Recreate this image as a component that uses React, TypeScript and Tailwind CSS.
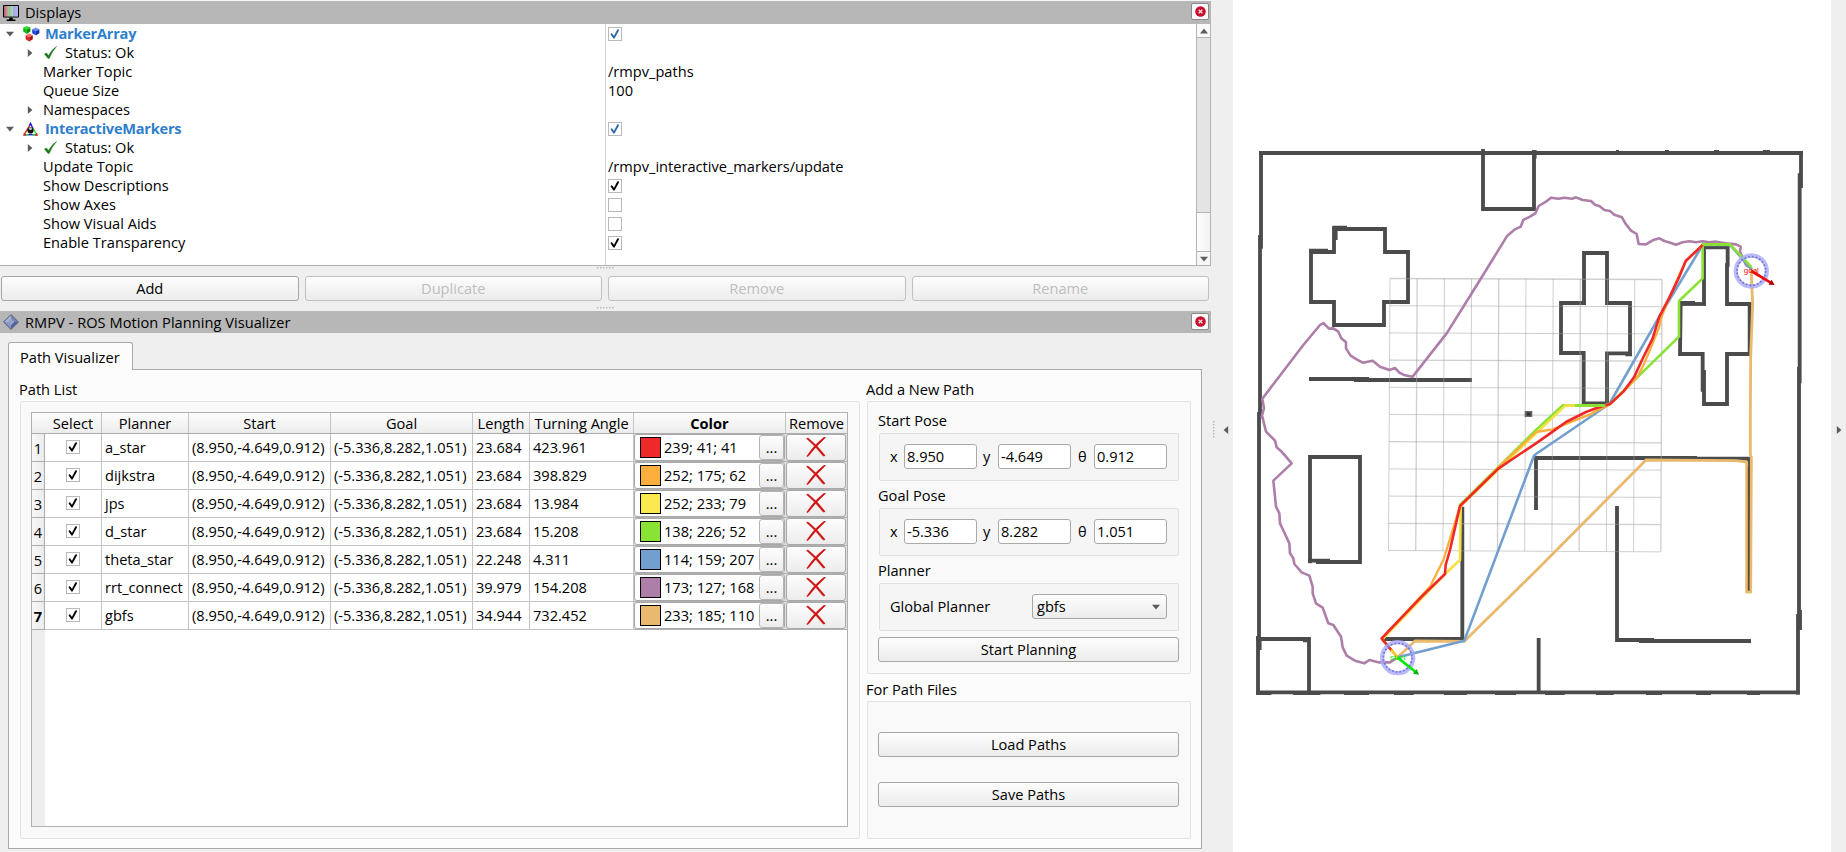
import type { ReactNode } from "react";

type Row = { planner: string; length: string; angle: string; rgb: string; swatch: string };

const START = "(8.950,-4.649,0.912)";
const GOAL = "(-5.336,8.282,1.051)";

const rows: Row[] = [
  { planner: "a_star", length: "23.684", angle: "423.961", rgb: "239; 41; 41", swatch: "bg-[#ef2929]" },
  { planner: "dijkstra", length: "23.684", angle: "398.829", rgb: "252; 175; 62", swatch: "bg-[#fcaf3e]" },
  { planner: "jps", length: "23.684", angle: "13.984", rgb: "252; 233; 79", swatch: "bg-[#fce94f]" },
  { planner: "d_star", length: "23.684", angle: "15.208", rgb: "138; 226; 52", swatch: "bg-[#8ae234]" },
  { planner: "theta_star", length: "22.248", angle: "4.311", rgb: "114; 159; 207", swatch: "bg-[#729fcf]" },
  { planner: "rrt_connect", length: "39.979", angle: "154.208", rgb: "173; 127; 168", swatch: "bg-[#ad7fa8]" },
  { planner: "gbfs", length: "34.944", angle: "732.452", rgb: "233; 185; 110", swatch: "bg-[#e9b96e]" },
];

/* ---------- small widgets ---------- */

function Checkbox({ checked, blue }: { checked?: boolean; blue?: boolean }) {
  return (
    <span className="flex h-[14px] w-[14px] shrink-0 items-center justify-center border border-[#b9b9b9] bg-white">
      {checked && (
        <svg viewBox="0 0 12 12" className="h-3 w-3">
          <path
            d="M2.6 6.2 L5 9.6 L9 2.2"
            fill="none"
            stroke={blue ? "#2a6aa8" : "#000"}
            strokeWidth="1.9"
            strokeLinejoin="round"
            strokeLinecap="round"
          />
        </svg>
      )}
    </span>
  );
}

function CloseButton() {
  return (
    <button className="mb-[2px] flex h-[17px] w-[18px] items-center justify-center rounded-[2px] border border-[#8b8b8b] bg-[#fbfbfb]">
      <svg viewBox="0 0 10 10" className="h-[11px] w-[11px]">
        <circle cx="5" cy="5" r="4.8" fill="#c8102e" />
        <path d="M3.4 3.4 L6.6 6.6 M6.6 3.4 L3.4 6.6" stroke="#f8d6dc" strokeWidth="1.3" />
      </svg>
    </button>
  );
}

function Button({ children, disabled, className = "" }: { children: ReactNode; disabled?: boolean; className?: string }) {
  return (
    <button
      className={`flex h-[25px] items-center justify-center rounded-[3px] border bg-linear-to-b from-[#fdfdfd] to-[#ececec] pb-px ${
        disabled ? "border-[#c0c0c0] text-[#bebebe]" : "border-[#a6a6a6] text-black"
      } ${className}`}
    >
      {children}
    </button>
  );
}

function SplitterDots() {
  return (
    <svg viewBox="0 0 18 2" className="block h-[2px] w-[18px]">
      {[0, 3, 6, 9, 12, 15].map((x) => (
        <rect key={x} x={x} y="0" width="1.4" height="1.4" fill="#b4b4b4" />
      ))}
    </svg>
  );
}

function Triangle({ dir, size = 8 }: { dir: "up" | "down" | "left" | "right"; size?: number }) {
  const points = {
    up: "0,6.5 8,6.5 4,1.5",
    down: "0,1.8 8,1.8 4,6.6",
    left: "6.2,0 6.2,8 1.6,4",
    right: "1.8,0 1.8,8 6.4,4",
  }[dir];
  return (
    <svg viewBox="0 0 8 8" width={size} height={size} className="shrink-0">
      <polygon points={points} fill="#5c5c5c" />
    </svg>
  );
}

function Field({ label, value, gap }: { label: string; value: string; gap: string }) {
  return (
    <>
      <span className={gap}>{label}</span>
      <span className="flex h-[25px] w-[73px] items-center rounded-[3px] border border-[#a9a9a9] bg-white pl-[2px]">{value}</span>
    </>
  );
}

function Pose({ title, x, y, theta }: { title: string; x: string; y: string; theta: string }) {
  return (
    <section>
      <h3 className="h-[27px] leading-[29px]">{title}</h3>
      <div className="ml-px flex h-[48px] items-center rounded-[2px] border border-[#e0e0e0] bg-[#f5f5f5] pb-px pl-[10px]">
        <Field label="x" value={x} gap="w-[14px]" />
        <Field label="y" value={y} gap="ml-[6px] w-[15px]" />
        <Field label="θ" value={theta} gap="ml-[7px] w-[16px]" />
      </div>
    </section>
  );
}

/* ---------- icons ---------- */

function MonitorIcon() {
  return (
    <svg viewBox="0 0 16 16" className="h-4 w-4 shrink-0">
      <defs>
        <linearGradient id="screen">
          <stop offset="0" stopColor="#b8606a" />
          <stop offset="0.3" stopColor="#cdaaac" />
          <stop offset="0.36" stopColor="#84cc92" />
          <stop offset="0.64" stopColor="#acdcb4" />
          <stop offset="0.68" stopColor="#a9a6e0" />
          <stop offset="1" stopColor="#b4b2f4" />
        </linearGradient>
      </defs>
      <rect x="0" y="0" width="16" height="12.5" rx="0.8" fill="#000" />
      <rect x="1" y="1" width="14" height="10.6" fill="url(#screen)" />
      <path d="M6.6 12.4h2.8l.6 2h2.4V16H3.6v-1.6H6z" fill="#000" />
    </svg>
  );
}

function CubesIcon() {
  const cube = (x: number, y: number, light: string, mid: string, dark: string) => (
    <g transform={`translate(${x} ${y})`}>
      <polygon points="3.6,0 7.2,1.6 3.6,3.6 0,1.6" fill={light} />
      <polygon points="0,1.6 3.6,3.6 3.6,8 0,5.6" fill={mid} />
      <polygon points="7.2,1.6 3.6,3.6 3.6,8 7.2,5.6" fill={dark} />
    </g>
  );
  return (
    <svg viewBox="0 0 17 16" className="h-4 w-[17px] shrink-0">
      {cube(0.2, 0, "#2be02b", "#10b810", "#069006")}
      {cube(9.2, 1.6, "#6f8ff5", "#1d45d8", "#1434a8")}
      {cube(2.6, 7.6, "#f56a6a", "#d92525", "#a81010")}
    </svg>
  );
}

function InteractiveIcon() {
  return (
    <svg viewBox="0 0 15 14" className="h-[14px] w-[15px] shrink-0">
      <path d="M7.5 2 L1.4 12.3" stroke="#e02020" strokeWidth="1.4" />
      <path d="M7.5 2 L10.4 7" stroke="#2020e0" strokeWidth="1.4" />
      <path d="M9.8 6 L13.4 12" stroke="#2adb2a" strokeWidth="1.4" />
      <path d="M1 12.7 H14" stroke="#2020e0" strokeWidth="1.4" />
      <path d="M2.5 12.7 H5.5 M9.5 12.7 H12.5" stroke="#2adb2a" strokeWidth="1.4" />
      <path d="M7.5 0 L9.4 3.4 H5.6Z" fill="#2020e0" />
      <path d="M0 13.8 L1 10.6 L3 13.8Z M15 13.8 L14 10.6 L12 13.8Z" fill="#e02020" />
      <circle cx="7.5" cy="8.4" r="3.1" fill="#111" />
      <path d="M5.4 6.8 L7.5 5.6 L9.6 6.8 L7.5 8.2Z" fill="#cfcfcf" />
    </svg>
  );
}

function DiamondIcon() {
  return (
    <svg viewBox="0 0 16 16" className="h-4 w-4 shrink-0">
      <polygon points="8,1 8,8 1,8" fill="#a9b6d3" />
      <polygon points="8,1 15,8 8,8" fill="#7385b3" />
      <polygon points="1,8 8,8 8,15" fill="#8595c0" />
      <polygon points="15,8 8,8 8,15" fill="#51639a" />
      <polygon points="8,4.4 11.4,8 8,11.4 4.6,8" fill="#93a3cb" />
      <polygon points="8,0.6 15.4,8 8,15.4 0.6,8" fill="none" stroke="#3a4973" strokeWidth="0.9" />
    </svg>
  );
}

function OkIcon() {
  return (
    <svg viewBox="0 0 13 13" className="h-[13px] w-[13px] shrink-0">
      <path
        d="M0.4 8 L2.4 6.9 L4.6 9.6 Q7.6 3.4 12.6 0.4 Q8 5.4 5.2 12.6 L4 12.6Z"
        fill="#1d7a1d"
        stroke="#1d7a1d"
        strokeWidth="0.4"
      />
    </svg>
  );
}

function CrossIcon() {
  return (
    <svg viewBox="0 0 20 20" className="h-5 w-5">
      <g fill="#d01010" stroke="#d01010" strokeWidth="0.6">
        <path d="M0.6 1.6 Q1.6 0.4 3 1.8 Q11.5 8.6 19 18.4 Q18 19.6 16.8 18.6 Q10 9.6 0.6 1.6Z" />
        <path d="M19.6 0.4 Q18 0 16.6 1.4 Q7.6 8.4 0.8 19.2 Q1.4 19.8 2.4 19 Q9.4 9.6 19.6 0.4Z" />
      </g>
    </svg>
  );
}

/* ---------- displays tree ---------- */

function TreeRow({ children, value }: { children: ReactNode; value?: ReactNode }) {
  return (
    <div className="flex h-[19px]">
      <div className="flex w-[608px] items-center">{children}</div>
      <div className="flex items-center">{value}</div>
    </div>
  );
}

function Leaf({ label, value }: { label: string; value: ReactNode }) {
  return (
    <TreeRow value={value}>
      <span className="pl-[43px]">{label}</span>
    </TreeRow>
  );
}

function Status() {
  return (
    <TreeRow>
      <span className="flex w-[44px] pl-[26px]">
        <Triangle dir="right" />
      </span>
      <OkIcon />
      <span className="pl-2">Status: Ok</span>
    </TreeRow>
  );
}

function DisplayHead({ icon, name }: { icon: ReactNode; name: string }) {
  return (
    <TreeRow value={<Checkbox checked blue />}>
      <span className="flex w-[23px] pl-[6px]">
        <Triangle dir="down" />
      </span>
      <span className="flex w-[22px]">{icon}</span>
      <span className="font-bold tracking-[-0.25px] text-[#2f7fcc]">{name}</span>
    </TreeRow>
  );
}

function DisplaysPanel() {
  return (
    <>
      <header className="flex h-[23px] items-center justify-between bg-[#b7b7b7] pl-[3px] pr-[2px]">
        <div className="flex items-center gap-[6px]">
          <MonitorIcon />
          <span>Displays</span>
        </div>
        <CloseButton />
      </header>
      <div className="flex h-[242px] border-b border-[#b0b0b0] bg-white">
        <div className="flex-1 bg-[linear-gradient(#d4d4d4,#d4d4d4)] bg-[length:1px_100%] bg-[position:605px_0] bg-no-repeat">
          <DisplayHead icon={<CubesIcon />} name="MarkerArray" />
          <Status />
          <Leaf label="Marker Topic" value="/rmpv_paths" />
          <Leaf label="Queue Size" value="100" />
          <TreeRow>
            <span className="flex w-[43px] pl-[26px]">
              <Triangle dir="right" />
            </span>
            <span>Namespaces</span>
          </TreeRow>
          <DisplayHead icon={<InteractiveIcon />} name="InteractiveMarkers" />
          <Status />
          <Leaf label="Update Topic" value="/rmpv_interactive_markers/update" />
          <Leaf label="Show Descriptions" value={<Checkbox checked />} />
          <Leaf label="Show Axes" value={<Checkbox />} />
          <Leaf label="Show Visual Aids" value={<Checkbox />} />
          <Leaf label="Enable Transparency" value={<Checkbox checked />} />
        </div>
        <div className="flex w-[15px] flex-col border-x border-[#b4b4b4] bg-[#e4e4e4]">
          <div className="flex h-[14px] items-center justify-center border-b border-[#b4b4b4] bg-[#fafafa]">
            <Triangle dir="up" />
          </div>
          <div className="flex-1" />
          <div className="h-[40px] border-y border-[#b4b4b4] bg-linear-to-r from-[#fdfdfd] to-[#f2f2f2]" />
          <div className="flex h-[13px] items-center justify-center bg-[#f6f6f6]">
            <Triangle dir="down" />
          </div>
        </div>
      </div>
      <div className="flex h-[10px] justify-center pt-px">
        <SplitterDots />
      </div>
      <div className="grid grid-cols-4 gap-x-[6px] pl-px pr-[2px]">
        <Button>Add</Button>
        <Button disabled>Duplicate</Button>
        <Button disabled>Remove</Button>
        <Button disabled>Rename</Button>
      </div>
      <div className="flex h-[10px] justify-center pt-[6px]">
        <SplitterDots />
      </div>
    </>
  );
}

/* ---------- path visualizer ---------- */

const COLS = "grid grid-cols-[13px_57px_87px_142px_142px_57px_104px_152px_61px]";

function PathTable() {
  const head = "flex items-center justify-center border-r border-[#c4c4c4]";
  const cell = "flex items-center border-r border-b border-[#c4c4c4] pl-[3px] whitespace-nowrap";
  return (
    <div className="flex h-[415px] w-[817px] flex-col border border-[#b0b0b0] bg-white">
      <div className={`${COLS} h-[21px] shrink-0 border-b border-[#acacac] bg-linear-to-b from-[#fdfdfd] to-[#ececec]`}>
        <span />
        <span className={head}>Select</span>
        <span className={head}>Planner</span>
        <span className={head}>Start</span>
        <span className={head}>Goal</span>
        <span className={head}>Length</span>
        <span className={`${head} whitespace-nowrap`}>Turning Angle</span>
        <span className={`${head} font-bold`}>Color</span>
        <span className="flex items-center justify-center">Remove</span>
      </div>
      {rows.map((r, i) => (
        <div key={r.planner} className={`${COLS} h-[28px] shrink-0`}>
          <span
            className={`flex items-center justify-center border-r border-b border-[#acacac] bg-linear-to-r from-[#f8f8f8] to-[#ececec] pt-[2px] ${
              i === rows.length - 1 ? "font-bold" : ""
            }`}
          >
            {i + 1}
          </span>
          <span className="flex items-center justify-center border-r border-b border-[#c4c4c4] pb-px">
            <Checkbox checked />
          </span>
          <span className={cell}>{r.planner}</span>
          <span className={cell}>{START}</span>
          <span className={cell}>{GOAL}</span>
          <span className={cell}>{r.length}</span>
          <span className={cell}>{r.angle}</span>
          <span className="flex border-b border-[#b0b0b0] bg-[#e0e0e0] pr-[1px]">
            <span className="flex flex-1 items-center rounded-[3px] border border-[#a8a8a8] bg-white pl-[5px]">
              <span className={`h-[21px] w-[21px] border border-black ${r.swatch}`} />
              <span className="pl-[3px]">{r.rgb}</span>
              <span className="ml-auto flex h-[25px] w-[25px] items-center justify-center rounded-[3px] border border-[#b4b4b4] bg-linear-to-b from-[#fdfdfd] to-[#ececec]">
                ...
              </span>
            </span>
          </span>
          <span className="flex border-b border-[#b0b0b0] bg-[#e0e0e0] pr-px">
            <span className="flex flex-1 items-center justify-center rounded-[3px] border border-[#a8a8a8] bg-linear-to-b from-[#fdfdfd] to-[#ececec] pb-[2px]">
              <CrossIcon />
            </span>
          </span>
        </div>
      ))}
      <div className="w-[13px] flex-1 bg-[#eeeeee]" />
    </div>
  );
}

function VisualizerPanel() {
  return (
    <>
      <header className="flex h-[22px] shrink-0 items-center justify-between bg-[#b7b7b7] pl-[3px] pr-[2px]">
        <div className="flex items-center gap-[6px]">
          <DiamondIcon />
          <span className="tracking-[0.04px]">RMPV - ROS Motion Planning Visualizer</span>
        </div>
        <CloseButton />
      </header>
      <div className="flex h-[36px] items-end pl-[8px]">
        <div className="relative top-px z-10 flex h-[28px] w-[125px] items-center rounded-t-[3px] border border-b-0 border-[#a9a9a9] bg-[#fcfcfc] pl-[11px] pt-px">
          Path Visualizer
        </div>
      </div>
      <div className="ml-[8px] flex h-[480px] w-[1194px] shrink-0 border border-[#a9a9a9] bg-[#fcfcfc] pl-[11px] pt-[6px]">
        <section>
          <h2 className="-ml-px h-[25px] leading-[27px]">Path List</h2>
          <div className="flex h-[438px] w-[840px] rounded-[2px] border border-[#e2e2e2] bg-[#f9f9f9] pl-[10px] pt-[10px]">
            <PathTable />
          </div>
        </section>
        <section className="ml-[7px] w-[324px]">
          <h2 className="-ml-px h-[25px] leading-[27px]">Add a New Path</h2>
          <div className="h-[273px] rounded-[2px] border border-[#e2e2e2] bg-[#f9f9f9] pl-[10px] pr-[11px] pt-[4px]">
            <Pose title="Start Pose" x="8.950" y="-4.649" theta="0.912" />
            <Pose title="Goal Pose" x="-5.336" y="8.282" theta="1.051" />
            <section>
              <h3 className="h-[27px] leading-[29px]">Planner</h3>
              <div className="ml-px flex h-[48px] items-center justify-between rounded-[2px] border border-[#e0e0e0] bg-[#f5f5f5] pb-px pl-[10px] pr-[11px]">
                <span>Global Planner</span>
                <span className="flex h-[25px] w-[135px] items-center justify-between rounded-[3px] border border-[#a6a6a6] bg-linear-to-b from-[#fdfdfd] to-[#ececec] pl-[4px] pr-[6px]">
                  gbfs
                  <Triangle dir="down" />
                </span>
              </div>
            </section>
            <Button className="mt-[6px] w-full">Start Planning</Button>
          </div>
          <h2 className="-ml-px h-[27px] leading-[31px]">For Path Files</h2>
          <div className="h-[138px] rounded-[2px] border border-[#e2e2e2] bg-[#f9f9f9] pl-[10px] pr-[11px] pt-[30px]">
            <Button className="w-full">Load Paths</Button>
            <Button className="mt-[25px] w-full">Save Paths</Button>
          </div>
        </section>
      </div>
    </>
  );
}

/* ---------- map view ---------- */

type Pt = [number, number];
// The map is surveyed in four tiles; each helper moves a tile's points to map units (1/3 px).
const tile = (dx: number, dy: number) => (...pts: Pt[]): Pt[] => pts.map(([x, y]) => [x + dx, y + dy] as Pt);
const nw = tile(-9, 390);
const ne = tile(909, 390);
const sw = tile(-9, 1230);
const se = tile(909, 1230);
const str = (pts: Pt[]) => pts.map((p) => p.join(",")).join(" ");

const walls: Pt[][] = [
  nw([87, 69], [1719, 69]),
  nw([93, 64], [93, 356]),
  nw([90, 315], [90, 865]),
  nw([87, 846], [87, 1560]),
  nw([759, 57], [759, 237], [912, 237], [912, 60]),
  nw([914, 60], [914, 86]),
  nw([312, 290], [312, 366], [243, 366], [243, 516], [312, 516], [312, 585], [462, 585], [462, 516], [534, 516], [534, 366], [465, 366], [465, 297], [308, 297]),
  nw([307, 293], [351, 293]),
  nw([317, 293], [317, 330]),
  nw([237, 362], [294, 362]),
  nw([237, 747], [417, 747]),
  nw([372, 750], [726, 750]),
  ne([795, 64], [795, 174]),
  ne([791, 130], [791, 760]),
  ne([789, 710], [789, 1500]),
  ne([144, 524], [144, 369], [213, 369], [213, 519], [282, 519], [282, 670], [213, 670], [213, 820], [143, 820], [143, 669], [75, 669], [75, 519], [150, 519]),
  ne([268, 673], [288, 673]),
  ne([504, 524], [504, 352], [575, 352], [575, 410]),
  ne([573, 400], [573, 522], [641, 522], [641, 672], [573, 672], [573, 822], [504, 822], [504, 720]),
  ne([500, 785], [500, 672], [432, 672], [434, 519], [477, 519]),
  ne([434, 522], [510, 522]),
  sw([240, 460], [240, 141], [390, 141], [390, 456], [258, 456]),
  sw([234, 452], [300, 452]),
  sw([78, 687], [237, 687], [237, 850]),
  sw([219, 691], [237, 691]),
  sw([84, 678], [84, 854]),
  sw([89, 690], [89, 720]),
  sw([78, 847], [1709, 847]),
  sw([697, 290], [697, 692]),
  sw([456, 687], [703, 687]),
  sw([918, 300], [918, 144], [1401, 144]),
  se([483, 146], [641, 146]),
  se([638, 142], [638, 547]),
  se([243, 288], [243, 690], [354, 690]),
  se([309, 693], [645, 693]),
  se([8, 684], [8, 850]),
  se([792, 600], [792, 660]),
  se([786, 612], [786, 854]),
];

const dashes: Pt[][] = [
  ...[[78, 124], [189, 271], [342, 417], [492, 551], [642, 711], [795, 858], [945, 1004], [1098, 1151], [1248, 1296], [1398, 1443], [1551, 1590]].map(
    ([a, b]) => sw([a, 852], [b, 852])
  ),
  ...[[240, 249], [387, 399], [534, 549], [681, 702]].map(([a, b]) => ne([a, 63], [b, 63])),
];

const rrt: Pt[] = [
  ...ne([645, 415], [630, 405], [612, 365], [614, 350], [600, 343], [580, 341], [540, 335], [520, 337], [500, 334], [480, 337], [460, 334], [440, 337], [420, 344], [403, 338], [385, 333], [370, 325], [350, 331], [330, 343], [308, 342], [302, 312], [285, 302], [268, 280], [258, 262], [235, 254], [222, 243], [205, 240], [190, 228], [178, 225], [165, 213], [140, 210], [120, 202], [108, 206], [85, 203], [68, 206], [45, 203], [30, 215], [8, 228], [0, 246]),
  ...nw([916, 250], [900, 260], [880, 270], [872, 290], [855, 298], [832, 317], [750, 450], [650, 610], [548, 740], [525, 736], [508, 728], [495, 714], [478, 720], [450, 710], [428, 692], [398, 698], [380, 688], [362, 677], [348, 655], [348, 637], [334, 625], [325, 605], [310, 595], [297, 596], [280, 579], [270, 585], [220, 645], [97, 806], [102, 835], [95, 860]),
  ...sw([97, 20], [108, 65], [135, 92], [140, 112], [155, 125], [185, 160], [130, 212], [138, 290], [148, 310], [150, 340], [165, 372], [178, 400], [180, 430], [190, 445], [193, 462], [215, 487], [238, 497], [248, 530], [248, 550], [258, 580], [278, 593], [295, 640], [310, 645], [333, 680], [338, 712], [350, 737], [375, 752], [403, 760], [418, 750], [445, 757], [480, 757], [503, 742]),
];

const gbfs: Pt[] = [
  ...ne([645, 415], [650, 520], [644, 680], [643, 870]),
  ...se([643, 135], [646, 142], [644, 546], [632, 546], [632, 156], [600, 152], [330, 150], [0, 482]),
  ...sw([703, 694], [555, 693], [503, 742]),
];

const theta: Pt[] = [
  ...ne([645, 415], [582, 345], [500, 345], [370, 560], [220, 822]),
  ...se([0, 132]),
  ...sw([912, 137], [703, 692], [503, 742]),
];

const dstar: Pt[] = [
  ...ne([645, 410], [582, 343], [500, 343], [500, 445], [429, 513], [429, 620], [222, 822], [205, 826], [80, 826]),
  ...se([0, 60]),
  ...sw([690, 285]),
];

const jps: Pt[] = [
  ...ne([120, 827], [88, 827]),
  ...se([0, 70]),
  ...sw([692, 288], [690, 450], [645, 492], [457, 688], [503, 742]),
];

const dijkstra: Pt[] = [
  ...ne([500, 345], [450, 393], [434, 425], [395, 515], [375, 565], [370, 590], [350, 640], [325, 700], [305, 740], [262, 785], [220, 824], [170, 848]),
  ...se([170, 10], [100, 38], [50, 58], [0, 66]),
  ...sw([805, 172], [690, 288], [665, 370], [640, 450], [625, 480], [600, 530], [455, 686], [503, 742]),
];

const astar: Pt[] = [
  ...ne([500, 345], [449, 393], [430, 440], [400, 503], [370, 560], [350, 625], [318, 690], [295, 740], [262, 785], [222, 822], [180, 835], [150, 846]),
  ...se([90, 36], [50, 65], [0, 100]),
  ...sw([870, 132], [805, 176], [690, 288], [660, 420], [647, 465], [645, 492], [575, 560], [455, 685], [485, 722]),
];

const paths: { pts: Pt[]; color: string; width?: number }[] = [
  { pts: gbfs, color: "#e9b96e", width: 8.5 },
  { pts: rrt, color: "#ad7fa8" },
  { pts: theta, color: "#729fcf" },
  { pts: dstar, color: "#8ae234" },
  { pts: jps, color: "#f6e145" },
  { pts: dijkstra, color: "#fcaf3e", width: 7 },
  { pts: astar, color: "#ef2929" },
];

function Pose2D({ x, y, dx, dy, label, color, dark }: { x: number; y: number; dx: number; dy: number; label: string; color: string; dark: string }) {
  const deg = (Math.atan2(dy, dx) * 180) / Math.PI;
  const len = Math.hypot(dx, dy);
  return (
    <g transform={`translate(${x} ${y})`}>
      <circle r="46.5" fill="none" stroke="#a8a8fa" strokeOpacity="0.8" strokeWidth="13" />
      <circle r="43" fill="none" stroke="#6464c4" strokeOpacity="0.8" strokeWidth="5" strokeDasharray="5.6 5.66" />
      <g transform={`rotate(${deg})`}>
        <path d={`M0 0 H${len - 14}`} stroke={color} strokeWidth="8" />
        <polygon points={`${len - 16},-9 ${len},0 ${len - 16},9`} fill={dark} />
      </g>
      <text y="6" textAnchor="middle" fill={color} className="font-['Liberation_Sans'] text-[24px]">
        {label}
      </text>
    </g>
  );
}

function MapView() {
  const cells = Array.from({ length: 11 }, (_, i) => i);
  return (
    <svg viewBox="0 0 1794 2556" className="h-[852px] w-[598px] bg-white">
      <g fill="none" stroke="#4b4b4b" strokeWidth="11.5" strokeLinejoin="miter">
        {walls.map((w, i) => (
          <polyline key={i} points={str(w)} />
        ))}
        <g strokeWidth="6">
          {dashes.map((d, i) => (
            <polyline key={i} points={str(d)} />
          ))}
        </g>
      </g>
      <g stroke="#a0a0a0" strokeOpacity="0.5">
        {cells.map((i) => (
          <g key={i}>
            <line x1={471 + i * 81.6} y1={835 + i * 0.3} x2={466.5 + i * 81.7} y2={1652 + i * 0.3} strokeWidth={i % 3 === 1 ? 4 : 3} />
            <line x1={471 - i * 0.4} y1={835.5 + i * 81.6} x2={1287 - i * 0.4} y2={838.5 + i * 81.7} strokeWidth={i % 3 === 0 ? 4 : 3} />
          </g>
        ))}
      </g>
      <path d="M875 1233h23v18h-23z" fill="#6a6a6a" />
      <path d="M881 1237h12v10h-12z" fill="#333" />
      <g fill="none" strokeLinejoin="round" strokeLinecap="round">
        {paths.map((p) => (
          <polyline key={p.color} points={str(p.pts)} stroke={p.color} strokeWidth={p.width ?? 7.8} />
        ))}
        <polyline points={str(sw([485, 722], [503, 742]))} stroke="#f8c838" strokeWidth="7.8" />
        <polyline points={str(ne([581, 343], [502, 343]))} stroke="#8ae234" strokeWidth="8" />
        <polyline points={str(ne([205, 827], [120, 827]))} stroke="#8ae234" strokeWidth="8" />
        <polyline points={str(se([638, 170], [638, 540]))} stroke="#5a4a38" strokeWidth="5" />
      </g>
      <Pose2D x={1555} y={813} dx={70} dy={42} label="goal" color="#ee0808" dark="#a80000" />
      <Pose2D x={494} y={1973} dx={64} dy={51} label="start" color="#08e808" dark="#08b408" />
    </svg>
  );
}

export default function App() {
  return (
    <div className="flex h-[852px] w-[1846px] overflow-hidden bg-[#efefef] font-['Open_Sans',sans-serif] text-[14.6px] leading-none text-black">
      <div className="flex w-[1211px] flex-col border-t border-[#f7f7f7]">
        <DisplaysPanel />
        <VisualizerPanel />
      </div>
      <div className="flex w-[22px] items-center pl-[2px] pt-[8px]">
        <svg viewBox="0 0 2 18" className="h-[18px] w-[2px]">
          {[0, 3, 6, 9, 12, 15].map((y) => (
            <rect key={y} x="0" y={y} width="1.4" height="1.4" fill="#b4b4b4" />
          ))}
        </svg>
        <span className="pl-[7px]">
          <Triangle dir="left" />
        </span>
      </div>
      <MapView />
      <div className="flex w-[15px] items-center pl-[4px] pt-[8px]">
        <Triangle dir="right" />
      </div>
    </div>
  );
}
